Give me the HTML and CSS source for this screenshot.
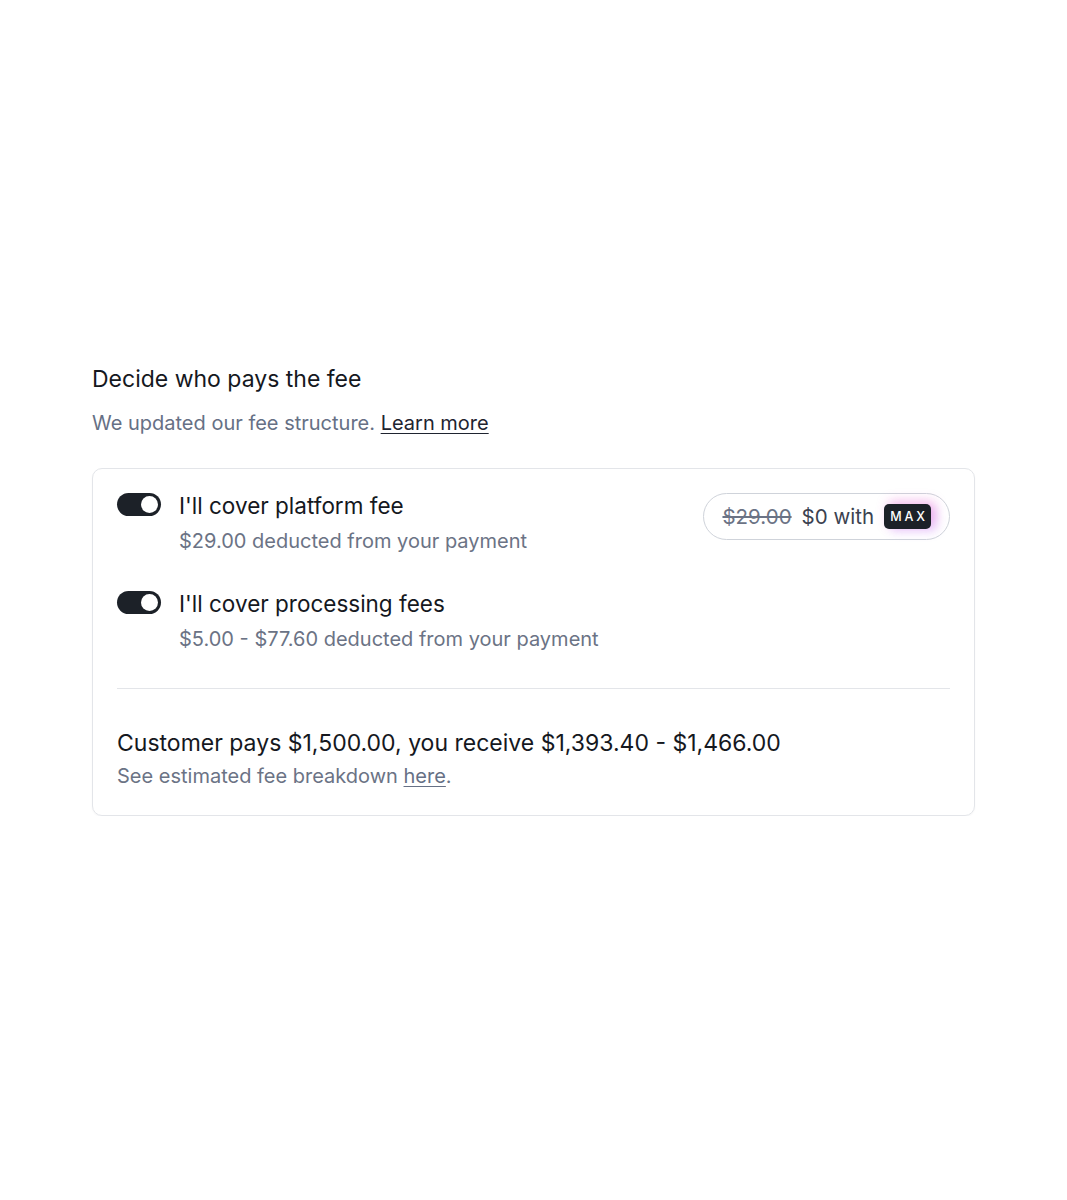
FILE: index.html
```html
<!DOCTYPE html>
<html>
<head>
<meta charset="utf-8">
<link rel="stylesheet" href="styles.css">
</head>
<body>
<main class="page">
  <section class="fee">
    <h2 class="fee-title">Decide who pays the fee</h2>
    <p class="fee-note">We updated our fee structure. <a href="#" class="link-dark">Learn more</a></p>
    <div class="card">
      <div class="option">
        <span class="toggle"><span class="knob"></span></span>
        <div class="option-text">
          <div class="option-title">I'll cover platform fee</div>
          <div class="option-sub">$29.00 deducted from your payment</div>
        </div>
        <div class="promo">
          <s class="promo-old">$29.00</s>
          <span class="promo-new">$0 with</span>
          <span class="max">MAX</span>
        </div>
      </div>
      <div class="option">
        <span class="toggle"><span class="knob"></span></span>
        <div class="option-text">
          <div class="option-title">I'll cover processing fees</div>
          <div class="option-sub">$5.00 - $77.60 deducted from your payment</div>
        </div>
      </div>
      <hr class="divider">
      <div class="summary">
        <div class="summary-main">Customer pays $1,500.00, you receive $1,393.40 - $1,466.00</div>
        <div class="summary-sub">See estimated fee breakdown <a href="#" class="link-gray">here</a>.</div>
      </div>
    </div>
  </section>
</main>
</body>
</html>
```

FILE: styles.css
```css
* { box-sizing: border-box; }
html, body { margin: 0; padding: 0; background: #ffffff; }
body {
  font-family: Inter, "Noto Sans", sans-serif;
  color: #15181e;
  -webkit-font-smoothing: antialiased;
}
.page {
  padding: 362px 92px 0 92px;
}
.fee { width: 883px; }
.fee-title {
  margin: 0;
  font-size: 23px;
  font-weight: 400;
  line-height: 34px;
  color: #15181e;
}
.fee-note {
  margin: 12px 0 0 0;
  font-size: 20px;
  line-height: 30px;
  color: #667085;
}
.link-dark { color: #1f2430; text-decoration: underline; text-underline-offset: 3px; text-decoration-thickness: 1px; }
.link-gray { color: #667085; text-decoration: underline; text-underline-offset: 3px; text-decoration-thickness: 1px; }
.card {
  margin-top: 30px;
  border: 1px solid #e3e5e9;
  border-radius: 10px;
  padding: 22px 24px 24px 24px;
  box-shadow: 0 1px 2px rgba(16, 24, 40, 0.04);
}
.option {
  display: flex;
  align-items: flex-start;
  gap: 18px;
}
.option + .option { margin-top: 33px; }
.toggle {
  flex: none;
  width: 44px;
  height: 23px;
  margin-top: 2px;
  border-radius: 12px;
  background: #1c2128;
  display: flex;
  align-items: center;
  justify-content: flex-end;
  padding-right: 3px;
}
.knob {
  width: 17px;
  height: 17px;
  border-radius: 50%;
  background: #ffffff;
}
.option-text { flex: 1; }
.option-title {
  font-size: 22.5px;
  line-height: 30px;
  color: #15181e;
}
.option-sub {
  margin-top: 5px;
  font-size: 20px;
  line-height: 30px;
  color: #6b7385;
}
.promo {
  flex: none;
  display: flex;
  align-items: center;
  height: 47px;
  margin-top: 2px;
  padding: 0 18px 0 18px;
  border: 1px solid #cfd3da;
  border-radius: 24px;
  gap: 10px;
}
.promo-old {
  font-size: 20.5px;
  color: #6b7385;
}
.promo-new {
  font-size: 20.5px;
  color: #3b4250;
}
.max {
  background: #1c2128;
  color: #ffffff;
  font-size: 12.5px;
  font-weight: 500;
  letter-spacing: 2.8px;
  width: 47px;
  height: 25px;
  display: flex;
  align-items: center;
  justify-content: center;
  padding-left: 3px;
  border-radius: 5px;
  box-shadow: 4px -3px 12px rgba(236, 72, 200, 0.35), 6px 3px 10px rgba(180, 120, 255, 0.25);
}
.divider {
  border: 0;
  border-top: 1px solid #e3e5e9;
  margin: 34px 0 0 0;
}
.summary { padding-top: 38px; }
.summary-main {
  font-size: 23px;
  line-height: 32px;
  color: #15181e;
}
.summary-sub {
  margin-top: 2px;
  font-size: 20px;
  line-height: 30px;
  color: #6b7385;
}
```
